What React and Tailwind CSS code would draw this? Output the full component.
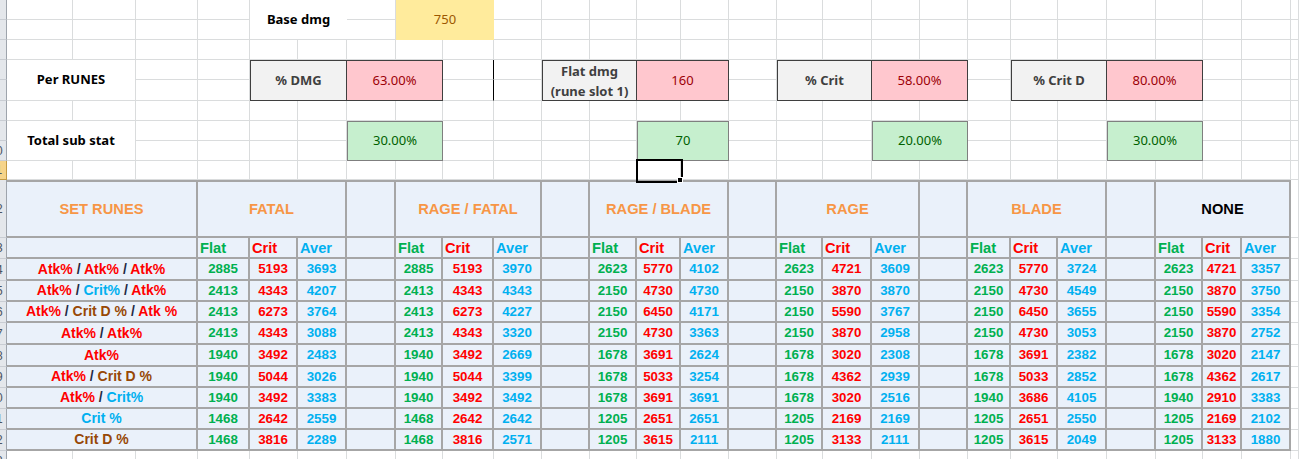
import React from "react";

const COLS = 28;
const ROW_H = "grid-rows-[20px_20px_20px_20px_21px_20px_20px_20px_19px_58px_21px_22px_21px_21px_22px_22px_21px_21px_21px_21px_20px]";
const COL_W = "grid-cols-[7px_66px_63px_62px_52px_48px_49px_49px_47px_51px_48px_48px_47px_44px_48px_48px_46px_49px_48px_48px_43px_47px_49px_49px_47px_39px_49px_1fr]";
const ROWS = 21;

const GRID = "border-r border-b border-[#dadcdd] bg-white";
const TB = "border-r-2 border-b-2 border-[#a6a6a6] bg-[#eaf1fa]";
const CS = { 1: "", 2: "col-span-2", 3: "col-span-3" };
const RS = { 1: "", 2: "row-span-2" };

const RED = "text-[#ff0000]";
const BLUE = "text-[#00b0f0]";
const GREEN = "text-[#00b050]";
const BROWN = "text-[#974806]";
const SLASH = "text-[#1f2a44]";

// label pieces for column A
const labels = [
  [["Atk%", RED], [" / ", SLASH], ["Atk%", RED], [" / ", SLASH], ["Atk%", RED]],
  [["Atk%", RED], [" / ", SLASH], ["Crit%", BLUE], [" / ", SLASH], ["Atk%", RED]],
  [["Atk%", RED], [" / ", SLASH], ["Crit D %", BROWN], [" / ", SLASH], ["Atk %", RED]],
  [["Atk%", RED], [" / ", SLASH], ["Atk%", RED]],
  [["Atk%", RED]],
  [["Atk%", RED], [" / ", SLASH], ["Crit D %", BROWN]],
  [["Atk%", RED], [" / ", SLASH], ["Crit%", BLUE]],
  [["Crit %", BLUE]],
  [["Crit D %", BROWN]],
];

const groups = [
  {
    name: "FATAL", c: 4,
    rows: [[2885, 5193, 3693], [2413, 4343, 4207], [2413, 6273, 3764], [2413, 4343, 3088], [1940, 3492, 2483], [1940, 5044, 3026], [1940, 3492, 3383], [1468, 2642, 2559], [1468, 3816, 2289]],
  },
  {
    name: "RAGE / FATAL", c: 8,
    rows: [[2885, 5193, 3970], [2413, 4343, 4343], [2413, 6273, 4227], [2413, 4343, 3320], [1940, 3492, 2669], [1940, 5044, 3399], [1940, 3492, 3492], [1468, 2642, 2642], [1468, 3816, 2571]],
  },
  {
    name: "RAGE / BLADE", c: 12,
    rows: [[2623, 5770, 4102], [2150, 4730, 4730], [2150, 6450, 4171], [2150, 4730, 3363], [1678, 3691, 2624], [1678, 5033, 3254], [1678, 3691, 3691], [1205, 2651, 2651], [1205, 3615, 2111]],
  },
  {
    name: "RAGE", c: 16,
    rows: [[2623, 4721, 3609], [2150, 3870, 3870], [2150, 5590, 3767], [2150, 3870, 2958], [1678, 3020, 2308], [1678, 4362, 2939], [1678, 3020, 2516], [1205, 2169, 2169], [1205, 3133, 2111]],
  },
  {
    name: "BLADE", c: 20,
    rows: [[2623, 5770, 3724], [2150, 4730, 4549], [2150, 6450, 3655], [2150, 4730, 3053], [1678, 3691, 2382], [1678, 5033, 2852], [1940, 3686, 4105], [1205, 2651, 2550], [1205, 3615, 2049]],
  },
  {
    name: "NONE", c: 24, dark: true,
    rows: [[2623, 4721, 3357], [2150, 3870, 3750], [2150, 5590, 3354], [2150, 3870, 2752], [1678, 3020, 2147], [1678, 4362, 2617], [1940, 2910, 3383], [1205, 2169, 2102], [1205, 3133, 1880]],
  },
];

const CENTER = "flex items-center justify-center text-center";
const LABEL_BOX = `${CENTER} border border-[#3f3f3f] bg-[#f2f2f2] text-[#3f3f3f] font-bold`;
const BAD_BOX = `${CENTER} border-y border-r border-[#3f3f3f] bg-[#ffc7ce] text-[#9c0006]`;
const GOOD_BOX = `${CENTER} border border-[#7f7f7f] bg-[#c6efce] text-[#006100]`;

function buildSpecs() {
  const s = [];
  const add = (r, c, rs, cs, cls, children) => s.push({ r, c, rs, cs, cls, children });

  // top block
  add(0, 5, 2, 2, `${CENTER} bg-white border-b border-[#dadcdd] font-bold text-black`, "Base dmg");
  add(0, 8, 2, 2, `${CENTER} bg-[#ffeb9c] text-[#9c5700]`, "750");

  add(3, 1, 2, 2, `${CENTER} ${GRID} font-bold text-black`, "Per RUNES");
  add(3, 5, 2, 2, LABEL_BOX, "% DMG");
  add(3, 7, 2, 2, BAD_BOX, "63.00%");
  add(3, 9, 1, 1, "border-r border-b border-r-black border-b-[#dadcdd] bg-white", null);
  add(4, 9, 1, 1, "border-r border-b border-r-black border-b-[#dadcdd] bg-white", null);
  add(3, 11, 2, 2, `${LABEL_BOX} leading-[20px]`, (
    <span>Flat dmg<br />(rune slot 1)</span>
  ));
  add(3, 13, 2, 2, BAD_BOX, "160");
  add(3, 16, 2, 2, LABEL_BOX, "% Crit");
  add(3, 18, 2, 2, BAD_BOX, "58.00%");
  add(3, 21, 2, 2, LABEL_BOX, "% Crit D");
  add(3, 23, 2, 2, BAD_BOX, "80.00%");

  add(6, 1, 2, 2, `${CENTER} ${GRID} font-bold text-black`, "Total sub stat");
  add(6, 7, 2, 2, GOOD_BOX, "30.00%");
  add(6, 13, 2, 2, GOOD_BOX, "70");
  add(6, 18, 2, 2, GOOD_BOX, "20.00%");
  add(6, 23, 2, 2, GOOD_BOX, "30.00%");

  // selected cell
  add(8, 13, 1, 1, `${GRID} relative`, (
    <div className="absolute -left-px -top-[2px] z-10 h-[24px] w-[47px] border-2 border-black">
      <div className="absolute -bottom-[2px] -right-[2px] h-[6px] w-[6px] border border-white bg-black" />
    </div>
  ));

  // table header
  const HEAD = `${TB} border-t-2 ${CENTER} font-['Liberation_Sans',Arial,sans-serif] text-[14.67px] font-bold`;
  add(9, 1, 1, 3, `${HEAD} text-[#f79646]`, "SET RUNES");
  groups.forEach((g) => {
    add(9, g.c, 1, 3, `${HEAD} ${g.dark ? "text-black" : "text-[#f79646]"}`, g.name);
    if (!g.dark) add(9, g.c + 3, 1, 1, `${TB} border-t-2`, null);
  });

  // sub header
  const SUB = `${TB} flex items-center pl-[2px] pt-[1px] font-['Liberation_Sans',Arial,sans-serif] text-[14.67px] font-bold`;
  add(10, 1, 1, 3, TB, null);
  groups.forEach((g) => {
    add(10, g.c, 1, 1, `${SUB} ${GREEN}`, "Flat");
    add(10, g.c + 1, 1, 1, `${SUB} ${RED}`, "Crit");
    add(10, g.c + 2, 1, 1, `${SUB} ${BLUE}`, "Aver");
    if (!g.dark) add(10, g.c + 3, 1, 1, TB, null);
  });

  // data rows
  const NUM = `${TB} ${CENTER} font-['Liberation_Sans',Arial,sans-serif] text-[13.33px] font-bold`;
  labels.forEach((parts, i) => {
    const r = 11 + i;
    add(r, 1, 1, 3, `${TB} ${CENTER} font-['Liberation_Sans',Arial,sans-serif] text-[14px] font-bold whitespace-pre`, (
      <span>
        {parts.map(([t, c], k) => (
          <span key={k} className={c}>{t}</span>
        ))}
      </span>
    ));
    groups.forEach((g) => {
      const [f, cr, av] = g.rows[i];
      add(r, g.c, 1, 1, `${NUM} ${GREEN}`, f);
      add(r, g.c + 1, 1, 1, `${NUM} ${RED}`, cr);
      add(r, g.c + 2, 1, 1, `${NUM} ${BLUE}`, av);
      if (!g.dark) add(r, g.c + 3, 1, 1, TB, null);
    });
  });

  // fill the rest with plain gridline cells
  const taken = Array.from({ length: ROWS }, () => Array(COLS).fill(false));
  s.forEach((x) => {
    for (let rr = x.r; rr < x.r + x.rs; rr++)
      for (let cc = x.c; cc < x.c + x.cs; cc++) taken[rr][cc] = true;
  });
  for (let r = 0; r < ROWS; r++) {
    add(r, 0, 1, 1, "rowhead", null);
    for (let c = 1; c < COLS; c++) if (!taken[r][c]) add(r, c, 1, 1, GRID, null);
  }
  s.sort((a, b) => a.r - b.r || a.c - b.c);
  return s;
}

// row header strip: only the right edge of the numbers shows, single digits are out of view
function RowHead({ n, active }) {
  return (
    <div
      className={`overflow-hidden border-b border-r ${
        active ? "border-[#c29a45] bg-[#f6d48a]" : "border-b-[#c9cdd3] border-r-[#9ea4ac] bg-[#e4e7eb]"
      }`}
    >
      {n >= 10 && (
        <div className="-ml-[16px] flex h-full w-[24px] items-center justify-center font-['Liberation_Sans',Arial,sans-serif] text-[12px] text-[#4a5361]">
          {n}
        </div>
      )}
    </div>
  );
}

export default function App() {
  const specs = buildSpecs();
  return (
    <div className="h-[459px] w-[1299px] overflow-hidden bg-white font-['Noto_Sans',Calibri,sans-serif] text-[13px]">
      <div className={`grid ${COL_W} ${ROW_H}`}>
        {specs.map((x) =>
          x.cls === "rowhead" ? (
            <RowHead key={`${x.r}-${x.c}`} n={x.r + 3} active={x.r === 8} />
          ) : (
            <div key={`${x.r}-${x.c}`} className={`${CS[x.cs]} ${RS[x.rs]} ${x.cls}`}>
              {x.children}
            </div>
          )
        )}
      </div>
    </div>
  );
}
